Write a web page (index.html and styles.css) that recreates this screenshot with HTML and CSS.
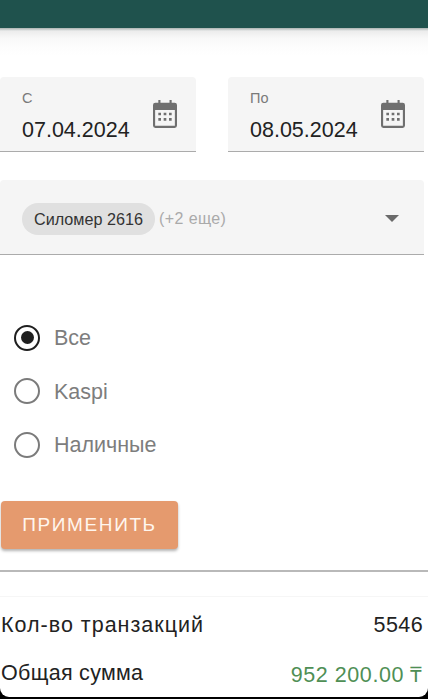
FILE: index.html
```html
<!DOCTYPE html>
<html lang="ru">
<head>
<meta charset="utf-8">
<title>Отчёт</title>
<link rel="stylesheet" href="styles.css">
</head>
<body>
<div class="page">
  <header class="topbar"></header>
  <div class="topshade"></div>
  <main class="content">
    <div class="dates">
      <div class="field date">
        <div class="date-text"><span class="label">С</span><span class="value">07.04.2024</span></div>
        <svg class="cal" viewBox="0 0 24 24"><path d="M7 1.5h1.6V3.5h6.800V1.500H17V3.500h2.200A1.800 1.800 0 0 1 21 5.300V20.700a1.800 1.800 0 0 1-1.800 1.800H4.800A1.800 1.800 0 0 1 3 20.700V5.300A1.800 1.800 0 0 1 4.800 3.500H7ZM4.600 9V20.900H19.400V9ZM7 11h2v2H7Zm4 0h2v2h-2Zm4 0h2v2h-2ZM7 15h2v2H7Zm4 0h2v2h-2Zm4 0h2v2h-2Z" fill-rule="evenodd"/></svg>
      </div>
      <div class="field date">
        <div class="date-text"><span class="label">По</span><span class="value">08.05.2024</span></div>
        <svg class="cal" viewBox="0 0 24 24"><path d="M7 1.5h1.6V3.5h6.800V1.500H17V3.500h2.200A1.800 1.800 0 0 1 21 5.300V20.700a1.800 1.800 0 0 1-1.800 1.800H4.800A1.800 1.800 0 0 1 3 20.700V5.300A1.800 1.800 0 0 1 4.800 3.500H7ZM4.600 9V20.900H19.400V9ZM7 11h2v2H7Zm4 0h2v2h-2Zm4 0h2v2h-2ZM7 15h2v2H7Zm4 0h2v2h-2Zm4 0h2v2h-2Z" fill-rule="evenodd"/></svg>
      </div>
    </div>
    <div class="field select">
      <span class="chip">Силомер 2616</span>
      <span class="more">(+2 еще)</span>
      <span class="arrow"></span>
    </div>
    <div class="radios">
      <div class="radio on"><span class="dot"></span><span class="radio-label">Все</span></div>
      <div class="radio"><span class="dot"></span><span class="radio-label">Kaspi</span></div>
      <div class="radio"><span class="dot"></span><span class="radio-label">Наличные</span></div>
    </div>
    <button class="apply" type="button">ПРИМЕНИТЬ</button>
    <hr class="divider">
    <section class="summary">
      <div class="row"><span class="wide">Кол-во транзакций</span><span class="num">5546</span></div>
      <div class="row"><span class="tight">Общая сумма</span><span class="num sum">952 200.00 ₸</span></div>
    </section>
  </main>
</div>
</body>
</html>
```
FILE: styles.css
```css
html, body {
  margin: 0;
  height: 699px;
  background: #000;
  overflow: hidden;
  font-family: "Liberation Sans", Arial, sans-serif;
}
.page {
  height: 697px;
  background: #fff;
  border-radius: 0 0 9px 9px;
  overflow: hidden;
}
.topbar {
  height: 28px;
  background: #1f524d;
}
.topshade {
  height: 28px;
  background: linear-gradient(#a9b3b1 0, #ececec 3px, #f8f8f8 10px, #fdfdfd 20px, #fff 28px);
}
.content {
  padding: 21px 4px 0 0;
}
.dates {
  display: flex;
  justify-content: space-between;
}
.field {
  background: #f5f5f5;
  border-bottom: 1.5px solid #ababab;
  border-radius: 4px 4px 0 0;
  box-sizing: border-box;
}
.date {
  width: 196px;
  height: 74.5px;
  padding: 0 19.5px 0 22px;
  display: flex;
  align-items: center;
  justify-content: space-between;
}
.date-text {
  display: flex;
  flex-direction: column;
  padding-top: 4px;
}
.label {
  font-size: 14.5px;
  line-height: 18px;
  color: #7a7a7a;
}
.value {
  font-size: 21.5px;
  line-height: 25px;
  margin-top: 11px;
  color: #222;
}
.cal {
  width: 32px;
  height: 32px;
  flex: none;
  fill: #6f6f6f;
  margin-right: -4px;
}
.select {
  margin-top: 28px;
  height: 75.5px;
  padding: 4px 25px 0 22px;
  display: flex;
  align-items: center;
}
.chip {
  height: 32px;
  line-height: 32px;
  padding: 0 12px;
  background: #e0e0e0;
  border-radius: 16px;
  font-size: 16.2px;
  color: #333;
}
.more {
  margin-left: 4px;
  font-size: 16px;
  letter-spacing: .4px;
  color: #aaa;
}
.arrow {
  margin-left: auto;
  width: 0;
  height: 0;
  border: 7px solid transparent;
  border-top: 7px solid #6a6a6a;
  border-bottom: 0;
}
.radios {
  margin-top: 56px;
  display: flex;
  flex-direction: column;
}
.radio {
  height: 53.5px;
  display: flex;
  align-items: center;
  gap: 14px;
  padding-left: 14px;
  font-size: 21.5px;
  color: #7d7d7d;
}
.radio-label {
  padding-top: 2px;
}
.dot {
  width: 26px;
  height: 26px;
  box-sizing: border-box;
  border: 2.5px solid #7b7b7b;
  border-radius: 50%;
  display: flex;
  align-items: center;
  justify-content: center;
}
.on .dot {
  border-color: #1f1f1f;
}
.on .dot::after {
  content: "";
  width: 13px;
  height: 13px;
  background: #1f1f1f;
  border-radius: 50%;
}
.apply {
  display: block;
  margin: 29px 0 0 1px;
  width: 177px;
  height: 48px;
  border: 0;
  border-radius: 4px;
  background: #e59a6e;
  box-shadow: 0 2px 3px rgba(0, 0, 0, .3);
  color: #fff6ee;
  font-family: inherit;
  font-size: 19px;
  letter-spacing: 1.6px;
}
.divider {
  margin: 21px -4px 0 0;
  border: 0;
  height: 2px;
  background: #b9b9b9;
}
.summary {
  margin: 24px -4px 0 0;
  padding: 5px 5px 0 1px;
  border-top: 1px solid #f6f6f6;
}
.row {
  height: 48px;
  display: flex;
  justify-content: space-between;
  align-items: center;
  font-size: 21.5px;
  color: #222;
}
.wide {
  letter-spacing: 1px;
}
.tight {
  letter-spacing: .3px;
}
.num {
  letter-spacing: .4px;
}
.sum {
  letter-spacing: .55px;
  color: #4f8f55;
}
```
